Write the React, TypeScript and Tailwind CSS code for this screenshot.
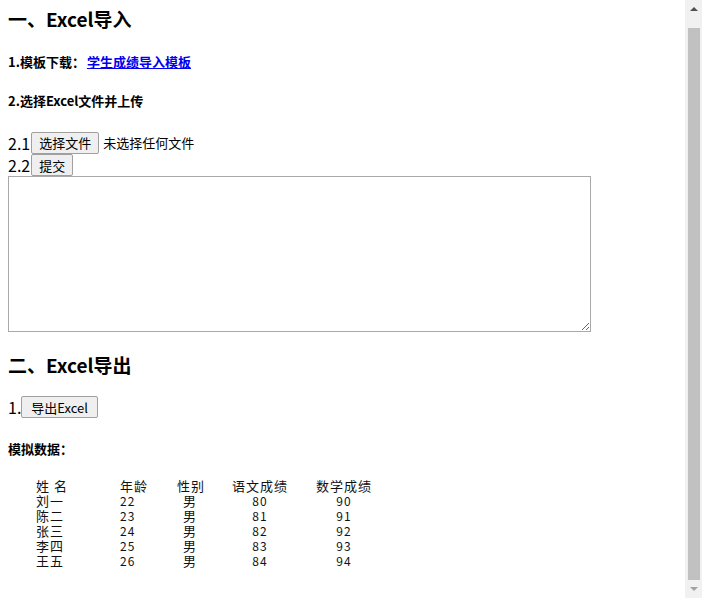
import React from "react";

const rows = [
  { name: "刘一", age: 22, sex: "男", chinese: 80, math: 90 },
  { name: "陈二", age: 23, sex: "男", chinese: 81, math: 91 },
  { name: "张三", age: 24, sex: "男", chinese: 82, math: 92 },
  { name: "李四", age: 25, sex: "男", chinese: 83, math: 93 },
  { name: "王五", age: 26, sex: "男", chinese: 84, math: 94 },
];

const btn =
  "h-[22px] px-[7px] border border-[#a0a0a0] rounded-[2px] bg-[#efefef] text-[13px] leading-none text-black";

const cols = "grid grid-cols-[84px_57px_55px_84px_auto] h-[15px] items-center";

const ScoreTable = () => (
  <div className="mt-[20px] pl-[28px] text-[13px] leading-[15px] tracking-[1px] text-[#111] font-['Noto_Sans_CJK_SC',monospace]">
    <div className={cols}>
      <span>姓 名</span>
      <span>年龄</span>
      <span>性别</span>
      <span>语文成绩</span>
      <span>数学成绩</span>
    </div>
    {rows.map((r) => (
      <div key={r.name} className={cols}>
        <span>{r.name}</span>
        <span className="text-[12px]">{r.age}</span>
        <span className="w-[26px] text-center">{r.sex}</span>
        <span className="w-[56px] text-center text-[12px]">{r.chinese}</span>
        <span className="w-[56px] text-center text-[12px]">{r.math}</span>
      </div>
    ))}
  </div>
);

const Scrollbar = () => (
  <div className="w-[17px] h-[598px] bg-[#f1f1f1] flex flex-col items-center">
    <div className="h-[17px] w-full flex items-center justify-center">
      <div className="w-0 h-0 border-l-[4px] border-r-[4px] border-b-[4px] border-l-transparent border-r-transparent border-b-[#505050]" />
    </div>
    <div className="mt-[11px] w-[12px] h-[552px] bg-[#c1c1c1]" />
    <div className="flex-1 w-full flex items-center justify-center">
      <div className="w-0 h-0 border-l-[4px] border-r-[4px] border-t-[4px] border-l-transparent border-r-transparent border-t-[#a3a3a3]" />
    </div>
  </div>
);

export default function App() {
  return (
    <div className="w-[702px] h-[598px] flex bg-white overflow-hidden font-['Noto_Sans_CJK_SC',sans-serif] text-black">
      <div className="flex-1 flex flex-col items-start pl-[8px]">
        <h2 className="mt-[7px] text-[19px] leading-[24px] font-bold">一、Excel导入</h2>

        <p className="mt-[22px] text-[13px] leading-[18px] font-bold">
          1.模板下载：
          <a href="#" className="ml-[2px] text-[#0000ee] underline">
            学生成绩导入模板
          </a>
        </p>

        <p className="mt-[21px] text-[13px] leading-[18px] font-bold">2.选择Excel文件并上传</p>

        <div className="mt-[21px] flex items-center h-[23px]">
          <span className="text-[16px] leading-none pr-[1px]">2.1</span>
          <button className={btn}>选择文件</button>
          <span className="ml-[4px] text-[13px]">未选择任何文件</span>
        </div>
        <div className="flex items-center h-[22px]">
          <span className="text-[16px] leading-none pr-[1px]">2.2</span>
          <button className={btn}>提交</button>
        </div>
        <textarea className="w-[583px] h-[156px] border border-[#a9a9a9] bg-white outline-none" />

        <h2 className="mt-[21px] text-[19px] leading-[24px] font-bold">二、Excel导出</h2>

        <div className="mt-[19px] flex items-center h-[22px]">
          <span className="text-[16px] leading-none">1.</span>
          <button className={`${btn} px-[9px]`}>导出Excel</button>
        </div>

        <p className="mt-[22px] text-[13px] leading-[18px] font-bold">模拟数据：</p>

        <ScoreTable />
      </div>
      <Scrollbar />
    </div>
  );
}
